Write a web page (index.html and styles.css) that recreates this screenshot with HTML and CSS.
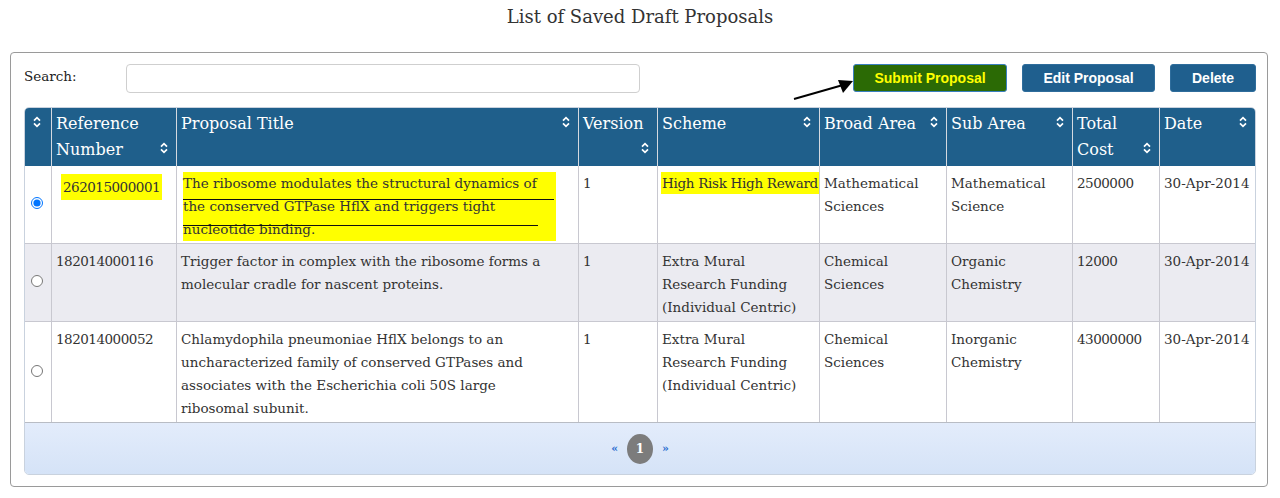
FILE: index.html
```html
<!DOCTYPE html>
<html lang="en">
  <head>
    <meta charset="UTF-8" />
    <meta name="viewport" content="width=device-width, initial-scale=1.0" />
    <title>Saved Draft Proposals</title>
    <link rel="stylesheet" href="styles.css">
  </head>
  <body>
    <h1 class="page-title">List of Saved Draft Proposals</h1>

    <div class="panel">
      <div class="toolbar">
        <label class="search-label" for="search">Search:</label>
        <input class="search-box" id="search" type="text" />
        <div class="actions">
          <button class="btn btn-submit">Submit Proposal</button>
          <button class="btn">Edit Proposal</button>
          <button class="btn btn-delete">Delete</button>
        </div>
      </div>

      <svg class="pointer" width="66" height="26" viewBox="0 0 66 26">
        <line x1="3" y1="22" x2="52" y2="8" stroke="#000" stroke-width="2" />
        <polygon points="62,4 47,3 52,16" fill="#000" />
      </svg>

      <div class="grid-wrap">
        <table class="grid">
          <colgroup>
            <col style="width:26px" />
            <col style="width:125px" />
            <col style="width:402px" />
            <col style="width:79px" />
            <col style="width:162px" />
            <col style="width:127px" />
            <col style="width:126px" />
            <col style="width:87px" />
            <col style="width:96px" />
          </colgroup>
          <thead>
            <tr>
              <th class="sel-col"><span class="sort"></span></th>
              <th>Reference Number<span class="sort"></span></th>
              <th>Proposal Title<span class="sort"></span></th>
              <th>Version<span class="sort"></span></th>
              <th>Scheme<span class="sort"></span></th>
              <th>Broad Area<span class="sort"></span></th>
              <th>Sub Area<span class="sort"></span></th>
              <th>Total Cost<span class="sort"></span></th>
              <th>Date<span class="sort"></span></th>
            </tr>
          </thead>
          <tbody>
            <tr>
              <td class="sel-col"><input type="radio" name="pick" checked /></td>
              <td class="num"><span class="mark mark-ref">262015000001</span></td>
              <td class="title-col"><div class="mark-block">The ribosome modulates the structural dynamics of the conserved GTPase HflX and triggers tight nucleotide binding.</div></td>
              <td>1</td>
              <td class="scheme-col"><span class="mark mark-scheme">High Risk High Reward</span></td>
              <td>Mathematical Sciences</td>
              <td>Mathematical Science</td>
              <td class="num">2500000</td>
              <td>30-Apr-2014</td>
            </tr>
            <tr class="alt">
              <td class="sel-col"><input type="radio" name="pick" /></td>
              <td class="num">182014000116</td>
              <td class="title-col">Trigger factor in complex with the ribosome forms a molecular cradle for nascent proteins.</td>
              <td>1</td>
              <td class="scheme-col">Extra Mural Research Funding (Individual Centric)</td>
              <td>Chemical Sciences</td>
              <td>Organic Chemistry</td>
              <td class="num">12000</td>
              <td>30-Apr-2014</td>
            </tr>
            <tr>
              <td class="sel-col"><input type="radio" name="pick" /></td>
              <td class="num">182014000052</td>
              <td class="title-col">Chlamydophila pneumoniae HflX belongs to an uncharacterized family of conserved GTPases and associates with the Escherichia coli 50S large ribosomal subunit.</td>
              <td>1</td>
              <td class="scheme-col">Extra Mural Research Funding (Individual Centric)</td>
              <td>Chemical Sciences</td>
              <td>Inorganic Chemistry</td>
              <td class="num">43000000</td>
              <td>30-Apr-2014</td>
            </tr>
          </tbody>
        </table>
        <div class="pager">
          <a class="pager-arrow" href="#">&laquo;</a>
          <span class="pager-page">1</span>
          <a class="pager-arrow" href="#">&raquo;</a>
        </div>
      </div>
    </div>
  </body>
</html>
```

FILE: styles.css
```css
* {
  margin: 0;
  padding: 0;
  box-sizing: border-box;
}

body {
  background: #fff;
  color: #333;
  font-family: "DejaVu Serif", "Liberation Serif", serif;
}

.page-title {
  height: 52px;
  padding-top: 6px;
  text-align: center;
  font-size: 18px;
  font-weight: normal;
  color: #333;
}

.panel {
  position: relative;
  margin: 0 12px 0 10px;
  padding: 11px 11px 11px 13px;
  border: 1px solid #9a9a9a;
  border-radius: 4px;
}

.toolbar {
  display: flex;
  align-items: center;
  height: 29px;
  margin-bottom: 14px;
}

.search-label {
  width: 102px;
  font-size: 13.5px;
  color: #222;
  margin-top: -5px;
}

.search-box {
  width: 514px;
  height: 29px;
  border: 1px solid #cfcfcf;
  border-radius: 4px;
}

.actions {
  display: flex;
  gap: 15px;
  margin-left: auto;
  margin-top: -2px;
}

.btn {
  height: 28px;
  width: 133px;
  border: 1px solid #2f6d9c;
  border-radius: 3px;
  background: #1f5f8e;
  color: #fff;
  font-family: "Liberation Sans", Arial, sans-serif;
  font-weight: bold;
  font-size: 14px;
}

.btn-submit {
  width: 154px;
  background: #2b6a05;
  border-color: #3a7fc0;
  color: #ffff00;
}

.btn-delete {
  width: 86px;
}

.pointer {
  position: absolute;
  left: 780px;
  top: 24px;
}

.grid-wrap {
  border: 1px solid #c9d2de;
  border-radius: 5px;
  overflow: hidden;
}

.grid {
  width: 100%;
  table-layout: fixed;
  border-collapse: separate;
  border-spacing: 0;
  font-size: 13.5px;
  color: #333;
}

.grid th {
  background: #1f5f8b;
  color: #fff;
  font-weight: normal;
  font-size: 16px;
  line-height: 26px;
  text-align: left;
  vertical-align: top;
  padding: 3px 8px 3px 4px;
  border-left: 1px solid #d4d9e0;
}

.grid th:first-child,
.grid td:first-child {
  border-left: none;
}

.sort {
  float: right;
  width: 8px;
  height: 26px;
  background: url("data:image/svg+xml,%3Csvg xmlns='http://www.w3.org/2000/svg' width='8' height='12' viewBox='0 0 8 12'%3E%3Cpath d='M1 4.6L4 1.6L7 4.6M1 7.4L4 10.4L7 7.4' fill='none' stroke='white' stroke-width='1.7'/%3E%3C/svg%3E") no-repeat center 5px;
}

.sel-col .sort {
  float: none;
  display: block;
  margin: 0 auto;
}

.grid th.sel-col {
  padding: 3px 2px 3px 0;
}

.grid td {
  line-height: 23px;
  vertical-align: top;
  padding: 6px 5px 2px 4px;
  border-left: 1px solid #c8c8d0;
  border-top: 1px solid #c8c8d0;
}

.grid tbody tr:first-child td {
  border-top: none;
}

.grid td.sel-col {
  vertical-align: middle;
  text-align: center;
  padding: 0 3px 0 0;
}

.grid td.title-col {
  padding-right: 13px;
}

.grid td.scheme-col {
  padding-right: 10px;
}

.num {
  letter-spacing: -0.5px;
}

.sel-col input {
  width: 12px;
  height: 12px;
  margin-top: 4px;
}

.alt td {
  background: #ebebf1;
}

.mark {
  background: #ffff00;
}

.mark-ref {
  display: inline-block;
  margin: 2px 0 0 5px;
  padding: 2px 2px 1px 2px;
}

.mark-scheme {
  display: inline-block;
  white-space: nowrap;
  margin: 0 -8px 0 -1px;
  padding: 0 1px;
  line-height: 22px;
  letter-spacing: -0.3px;
}

.mark-block {
  position: relative;
  background: #ffff00;
  margin: 0 9px 0 2px;
}

.mark-block::before,
.mark-block::after {
  content: "";
  position: absolute;
  left: 0;
  height: 1px;
  background: #111;
}

.mark-block::before {
  top: 27px;
  right: 2px;
}

.mark-block::after {
  top: 53px;
  right: 18px;
}

.pager {
  display: flex;
  align-items: center;
  justify-content: center;
  gap: 9px;
  height: 52px;
  border-top: 1px solid #b8bcc4;
  background: linear-gradient(#e3ecfb, #d5e3f7);
}

.pager-arrow {
  color: #2d6fd0;
  text-decoration: none;
  font-size: 11px;
  font-weight: bold;
}

.pager-page {
  width: 26px;
  height: 30px;
  border-radius: 50%;
  background: #7c7c7c;
  color: #fff;
  font-size: 12px;
  font-weight: bold;
  line-height: 30px;
  text-align: center;
}
```
